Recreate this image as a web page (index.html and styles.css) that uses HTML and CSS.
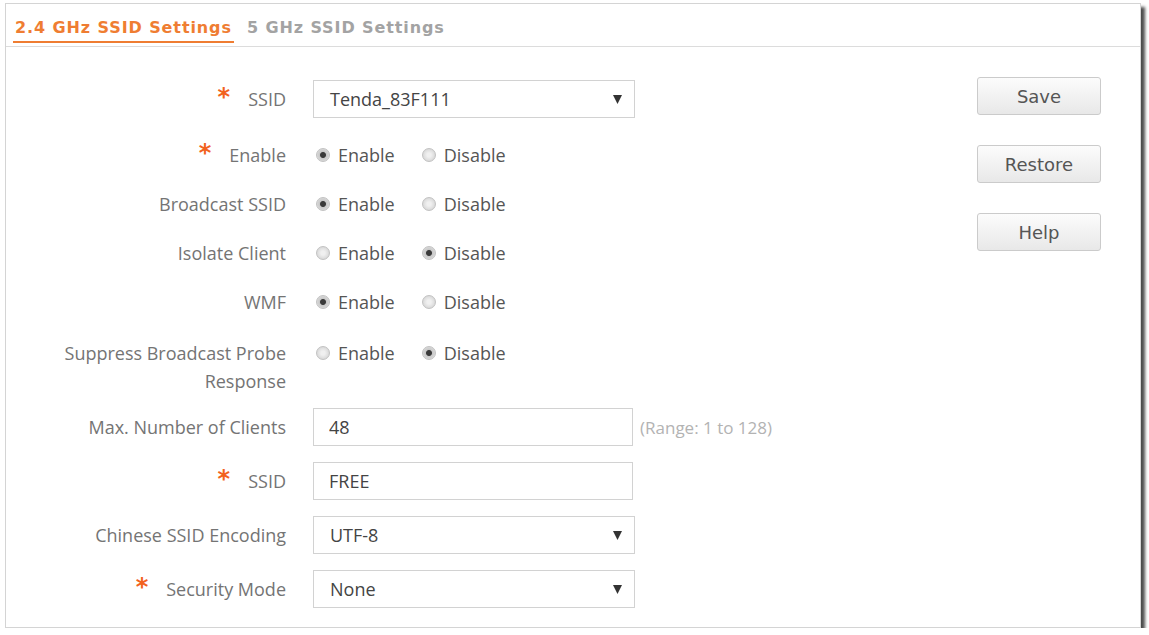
FILE: index.html
```html
<!DOCTYPE html>
<html lang="en">
<head>
  <meta charset="UTF-8">
  <title>Wireless Settings</title>
  <link rel="stylesheet" href="styles.css">
</head>
<body>

  <div class="panel">
    <div class="tabs">
      <a class="tab active" href="#">2.4 GHz SSID Settings</a>
      <a class="tab" href="#">5 GHz SSID Settings</a>
    </div>

    <div class="content">
      <form class="form">
        <div class="row">
          <label class="label"><span class="req">*</span>SSID</label>
          <div class="select">
            <span>Tenda_83F111</span>
            <svg class="caret" width="9" height="9" viewBox="0 0 9 9"><path d="M0 0h9L4.5 9z"/></svg>
          </div>
        </div>

        <div class="row choice">
          <label class="label"><span class="req">*</span>Enable</label>
          <div class="options">
            <label class="opt"><input type="radio" name="enable" checked>Enable</label>
            <label class="opt"><input type="radio" name="enable">Disable</label>
          </div>
        </div>

        <div class="row choice">
          <label class="label">Broadcast SSID</label>
          <div class="options">
            <label class="opt"><input type="radio" name="broadcast" checked>Enable</label>
            <label class="opt"><input type="radio" name="broadcast">Disable</label>
          </div>
        </div>

        <div class="row choice">
          <label class="label">Isolate Client</label>
          <div class="options">
            <label class="opt"><input type="radio" name="isolate">Enable</label>
            <label class="opt"><input type="radio" name="isolate" checked>Disable</label>
          </div>
        </div>

        <div class="row choice">
          <label class="label">WMF</label>
          <div class="options">
            <label class="opt"><input type="radio" name="wmf" checked>Enable</label>
            <label class="opt"><input type="radio" name="wmf">Disable</label>
          </div>
        </div>

        <div class="row choice two-line">
          <label class="label">Suppress Broadcast Probe Response</label>
          <div class="options">
            <label class="opt"><input type="radio" name="probe">Enable</label>
            <label class="opt"><input type="radio" name="probe" checked>Disable</label>
          </div>
        </div>

        <div class="row">
          <label class="label">Max. Number of Clients</label>
          <input class="text" type="text" value="48">
          <span class="hint">(Range: 1 to 128)</span>
        </div>

        <div class="row">
          <label class="label"><span class="req">*</span>SSID</label>
          <input class="text" type="text" value="FREE">
        </div>

        <div class="row">
          <label class="label">Chinese SSID Encoding</label>
          <div class="select">
            <span>UTF-8</span>
            <svg class="caret" width="9" height="9" viewBox="0 0 9 9"><path d="M0 0h9L4.5 9z"/></svg>
          </div>
        </div>

        <div class="row">
          <label class="label"><span class="req">*</span>Security Mode</label>
          <div class="select">
            <span>None</span>
            <svg class="caret" width="9" height="9" viewBox="0 0 9 9"><path d="M0 0h9L4.5 9z"/></svg>
          </div>
        </div>
      </form>

      <div class="actions">
        <button type="button" class="btn">Save</button>
        <button type="button" class="btn">Restore</button>
        <button type="button" class="btn">Help</button>
      </div>
    </div>
  </div>

</body>
</html>
```

FILE: styles.css
```css
* {
  box-sizing: border-box;
}

body {
  margin: 0;
  background: #fff;
  font-family: 'Open Sans', sans-serif;
  color: #6b6b6b;
}

.panel {
  width: 1136px;
  height: 625px;
  margin: 3px 0 0 5px;
  background: #fff;
  border: 1px solid #d4d4d4;
  box-shadow: 4px 4px 3px rgba(0, 0, 0, 0.7);
}

/* tab strip */
.tabs {
  display: flex;
  align-items: flex-end;
  height: 43px;
  padding: 0 0 3px 7px;
  border-bottom: 1px solid #dcdcdc;
}

.tab {
  padding: 0 2px 3px;
  border-bottom: 2px solid transparent;
  font-family: 'DejaVu Sans', sans-serif;
  font-size: 16px;
  font-weight: bold;
  line-height: 20px;
  letter-spacing: 0.9px;
  color: #a3a3a3;
  text-decoration: none;
}

.tab + .tab {
  margin-left: 11px;
}

.tab.active {
  color: #ef7d32;
  border-bottom-color: #ef7d32;
}

/* form body */
.content {
  display: flex;
  padding-top: 30px;
}

.form {
  display: flex;
  flex-direction: column;
  padding-top: 3px;
}

.row {
  display: flex;
  align-items: center;
  min-height: 38px;
  margin-bottom: 16px;
}

.row.choice {
  min-height: 36px;
  margin-bottom: 13px;
}

.row:first-child {
  margin-bottom: 19px;
}

.row.two-line {
  align-items: flex-start;
  padding-top: 6px;
  margin-bottom: 13px;
}

.label {
  flex: 0 0 280px;
  margin-right: 27px;
  text-align: right;
  font-size: 18px;
  line-height: 28px;
  color: #747474;
}

.req {
  margin-right: 18px;
  font-family: 'DejaVu Sans', sans-serif;
  font-weight: bold;
  font-size: 24px;
  line-height: 0;
  color: #f2621e;
  position: relative;
  top: -1px;
}

.options {
  display: flex;
  align-items: center;
  height: 28px;
}

.opt {
  display: inline-flex;
  align-items: center;
  font-size: 18px;
  color: #555;
}

.opt + .opt {
  margin-left: 24px;
}

.opt input {
  appearance: none;
  -webkit-appearance: none;
  width: 14px;
  height: 14px;
  margin: 0 8px 0 3px;
  border: 1px solid #c2c2c2;
  border-radius: 50%;
  background: radial-gradient(circle, #f0f0f0 0, #f0f0f0 2px, #d4d4d4 7px);
}

.opt input:checked {
  background: radial-gradient(circle, #3a3a3a 0, #3a3a3a 2.5px, #c8c8c8 3.5px, #dedede 7px);
}

.select,
.text {
  height: 38px;
  border: 1px solid #d2d2d2;
  background: #fff;
  font-family: 'Open Sans', sans-serif;
  font-size: 18px;
  color: #444;
}

.select {
  display: flex;
  align-items: center;
  justify-content: space-between;
  width: 322px;
  padding: 0 12px 0 16px;
}

.caret {
  fill: #333;
}

.text {
  width: 320px;
  padding: 0 15px;
  outline: none;
}

.hint {
  margin-left: 7px;
  font-size: 17px;
  color: #b3b3b3;
}

/* buttons on the right */
.actions {
  display: flex;
  flex-direction: column;
  gap: 30px;
  margin-left: auto;
  margin-right: 39px;
}

.btn {
  width: 124px;
  height: 38px;
  border: 1px solid #cbcbcb;
  border-radius: 3px;
  background: linear-gradient(#fcfcfc, #e8e8e8);
  font-family: 'DejaVu Sans', sans-serif;
  font-size: 18px;
  color: #555;
  cursor: pointer;
}
```
